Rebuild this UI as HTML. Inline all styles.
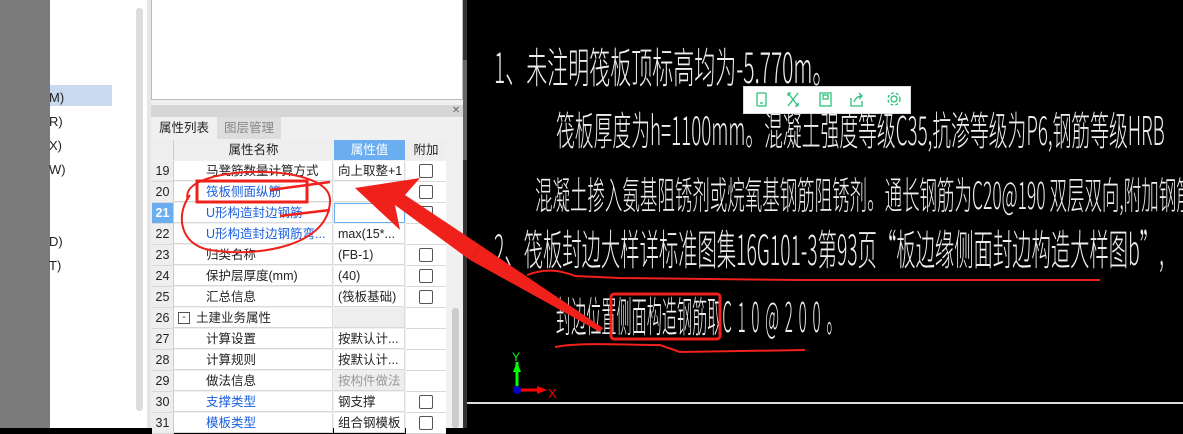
<html><head><style>
body{margin:0;width:1183px;height:428px;overflow:hidden;position:relative;background:#000;font-family:"Liberation Sans","Noto Sans CJK SC",sans-serif}
.a{position:absolute}
.row{position:absolute;left:152px;width:295px;height:21px;font-size:12.5px;line-height:21px;color:#222}
.row div{position:absolute;top:0;height:20px;border-bottom:1px solid #d8d8d8}
.n{left:0;width:21px;background:#eee;text-align:center;border-right:1px solid #ccc}
.nm{left:22px;width:159px;background:#fff;border-right:1px solid #ddd}
.v{left:182px;width:71px;background:#fff;border-right:1px solid #ddd;padding-left:4px;box-sizing:border-box;white-space:nowrap;overflow:hidden}
.c{left:254px;width:40px;background:#fff}
.cb{position:absolute;left:13px;top:3px;width:12px;height:12px;border:1px solid #555;border-radius:2px}
.blue{color:#1a5fe0}
.cad{position:absolute;color:#eee;white-space:nowrap;transform-origin:0 0;font-family:"Noto Sans CJK SC",sans-serif;font-weight:300;line-height:1}
#cv{position:absolute;left:467px;top:0;width:716px;height:428px;overflow:hidden}
</style></head><body>
<div class="a" style="left:0;top:0;width:50px;height:428px;background:#7b7b7b"></div>
<div class="a" style="left:50px;top:0;width:97px;height:428px;background:#fff"></div>
<div class="a" style="left:50px;top:85px;width:62px;height:21px;background:#c9d9ef"></div>
<div class="a" style="left:49px;top:86px;font-size:13px;color:#222;line-height:24px">M)<br>R)<br>X)<br>W)<br><br><br>D)<br>T)</div>
<div class="a" style="left:136px;top:8px;width:7px;height:403px;background:#ddd;border-radius:3px"></div>
<div class="a" style="left:147px;top:0;width:4px;height:428px;background:#e6e6e6"></div>
<div class="a" style="left:151px;top:0;width:312px;height:428px;background:#f0f0f0"></div>
<div class="a" style="left:151px;top:0;width:310px;height:99px;background:#fff;border:1px solid #bbb;border-top:none"></div>
<div class="a" style="left:151px;top:105px;width:312px;height:12px;background:#d6d6d6;font-size:10px;color:#666;text-align:right;line-height:12px">✕&nbsp;</div>
<div class="a" style="left:152px;top:117px;width:64px;height:22px;background:#f0f0f0;font-size:12.5px;line-height:22px;text-align:center;color:#222">属性列表</div>
<div class="a" style="left:217px;top:117px;width:64px;height:22px;background:#ddd;font-size:12.5px;line-height:22px;text-align:center;color:#888">图层管理</div>
<div class="a" style="left:152px;top:140px;width:21px;height:20px;background:#eee;border-right:1px solid #ccc"></div>
<div class="a" style="left:174px;top:140px;width:159px;height:20px;background:#eee;font-size:12.5px;line-height:20px;text-align:center;color:#222">属性名称</div>
<div class="a" style="left:334px;top:140px;width:71px;height:20px;background:#6aaeef;font-size:12.5px;line-height:20px;text-align:center;color:#fff">属性值</div>
<div class="a" style="left:406px;top:140px;width:40px;height:20px;background:#eee;font-size:12.5px;line-height:20px;text-align:center;color:#222">附加</div>
<div class="row" style="top:161px"><div class="n">19</div><div class="nm" style="padding-left:32px;box-sizing:border-box">马凳筋数量计算方式</div><div class="v">向上取整+1</div><div class="c"><span class="cb"></span></div></div>
<div class="row" style="top:182px"><div class="n">20</div><div class="nm blue" style="padding-left:32px;box-sizing:border-box">筏板侧面纵筋</div><div class="v"></div><div class="c"><span class="cb"></span></div></div>
<div class="row" style="top:203px"><div class="n" style="background:#6aaeef;color:#fff;font-weight:bold">21</div><div class="nm blue" style="padding-left:32px;box-sizing:border-box">U形构造封边钢筋</div><div class="v" style="border:1px solid #6aaeef"></div><div class="c"><span class="cb"></span></div></div>
<div class="row" style="top:224px"><div class="n">22</div><div class="nm blue" style="padding-left:32px;box-sizing:border-box;white-space:nowrap;overflow:hidden">U形构造封边钢筋弯...</div><div class="v">max(15*...</div><div class="c"></div></div>
<div class="row" style="top:245px"><div class="n">23</div><div class="nm" style="padding-left:32px;box-sizing:border-box">归类名称</div><div class="v">(FB-1)</div><div class="c"><span class="cb"></span></div></div>
<div class="row" style="top:266px"><div class="n">24</div><div class="nm" style="padding-left:32px;box-sizing:border-box">保护层厚度(mm)</div><div class="v">(40)</div><div class="c"><span class="cb"></span></div></div>
<div class="row" style="top:287px"><div class="n">25</div><div class="nm" style="padding-left:32px;box-sizing:border-box">汇总信息</div><div class="v">(筏板基础)</div><div class="c"><span class="cb"></span></div></div>
<div class="row" style="top:308px"><div class="n">26</div><div class="nm" style="padding-left:22px;box-sizing:border-box"><span style="position:absolute;left:4px;top:4px;width:10px;height:10px;border:1px solid #555;font-size:10px;line-height:9px;text-align:center">-</span>土建业务属性</div><div class="v" style="background:#eee"></div><div class="c"></div></div>
<div class="row" style="top:329px"><div class="n">27</div><div class="nm" style="padding-left:32px;box-sizing:border-box">计算设置</div><div class="v">按默认计...</div><div class="c"></div></div>
<div class="row" style="top:350px"><div class="n">28</div><div class="nm" style="padding-left:32px;box-sizing:border-box">计算规则</div><div class="v">按默认计...</div><div class="c"></div></div>
<div class="row" style="top:371px"><div class="n">29</div><div class="nm" style="padding-left:32px;box-sizing:border-box">做法信息</div><div class="v" style="background:#eee;color:#999">按构件做法</div><div class="c"></div></div>
<div class="row" style="top:392px"><div class="n">30</div><div class="nm blue" style="padding-left:32px;box-sizing:border-box">支撑类型</div><div class="v">钢支撑</div><div class="c"><span class="cb"></span></div></div>
<div class="row" style="top:413px"><div class="n">31</div><div class="nm blue" style="padding-left:32px;box-sizing:border-box">模板类型</div><div class="v">组合钢模板</div><div class="c"><span class="cb"></span></div></div>
<div class="a" style="left:452px;top:308px;width:7px;height:120px;background:#ccc;border-radius:3px"></div>
<div class="a" style="left:463px;top:0;width:4px;height:428px;background:#333"></div>
<div class="a" style="left:463px;top:60px;width:4px;height:100px;background:#666"></div>

<div id="cv">
<div class="a" style="left:0;top:402px;width:716px;height:2px;background:#ddd"></div>
<div class="cad" style="left:27px;top:45px;font-size:42px;transform:scaleX(0.5)">1、未注明筏板顶标高均为-5.770m。</div>
<div class="cad" style="left:89px;top:108px;font-size:40px;transform:scaleX(0.47)">筏板厚度为h=1100mm。混凝土强度等级C35,抗渗等级为P6,钢筋等级HRB</div>
<div class="cad" style="left:68px;top:174px;font-size:38px;transform:scaleX(0.46)">混凝土掺入氨基阻锈剂或烷氧基钢筋阻锈剂。通长钢筋为C20@190 双层双向,附加钢筋见</div>
<div class="cad" style="left:27px;top:227px;font-size:42px;transform:scaleX(0.46)">2、筏板封边大样详标准图集16G101-3第93页“板边缘侧面封边构造大样图b”,</div>
<div class="cad" style="left:89px;top:294px;font-size:42px;transform:scaleX(0.36)">封边位置侧面构造钢筋取<span style="letter-spacing:16px">C10@200。</span></div>
</div>

<div class="a" style="left:743px;top:86px;width:166px;height:26px;background:#fff;border:1px solid #ddd"></div>
<svg class="a" style="left:743px;top:86px" width="166" height="28" fill="none" stroke="#2dbf7a" stroke-width="1.3">
<rect x="14" y="7" width="9" height="13" rx="1"/><line x1="17" y1="17" x2="20" y2="17"/>
<path d="M45 7l10 13M55 7l-10 13M45 7h3M45 7v3M55 20h-3M55 20v-3"/>
<rect x="77" y="7" width="11" height="13"/><rect x="80" y="9" width="5" height="4"/>
<path d="M108 12v8h11v-5M111 16q2-6 8-6M116 7l3 3-3 3"/>
<circle cx="151" cy="13" r="3"/><circle cx="151" cy="13" r="6" stroke-dasharray="3 2"/>
</svg>

<svg class="a" style="left:0;top:0" width="1183" height="428" fill="none" stroke="#f0201a">
<rect x="197" y="181" width="110" height="21" stroke-width="3"/>
<path d="M188 200 C175 165 330 160 330 200 C330 245 260 258 210 250 C180 245 175 215 190 195" stroke-width="2"/>
<path d="M270 190 L300 186 L330 182 M280 216 L330 210" stroke-width="2.5"/>
<polygon points="355,188 400,230 395,205 470,260 480,245 405,195 420,178" fill="#f0201a" stroke="none"/>
<polygon points="470,260 600,332 603,328 480,245" fill="#f0201a" stroke="none"/>
<rect x="611" y="294" width="109" height="45" rx="3" stroke-width="3"/>
<path d="M527 275 C545 268 560 270 575 276 L620 278 L800 280 L1100 280" stroke-width="2"/>
<path d="M555 347 C580 342 620 345 660 345 L680 352 L805 350" stroke-width="2"/>
</svg>
<svg class="a" style="left:505px;top:350px" width="60" height="50">
<line x1="12" y1="12" x2="12" y2="40" stroke="#0f0" stroke-width="3"/><polygon points="8,22 12,12 16,22" fill="#0f0"/>
<text x="7" y="11" fill="#0f0" font-size="12">Y</text>
<line x1="12" y1="40" x2="38" y2="40" stroke="#f00" stroke-width="3"/><polygon points="32,36 42,40 32,44" fill="#f00"/>
<text x="43" y="48" fill="#f00" font-size="13">X</text>
<circle cx="12" cy="40" r="4" fill="#00c"/>
</svg>
</body></html>
